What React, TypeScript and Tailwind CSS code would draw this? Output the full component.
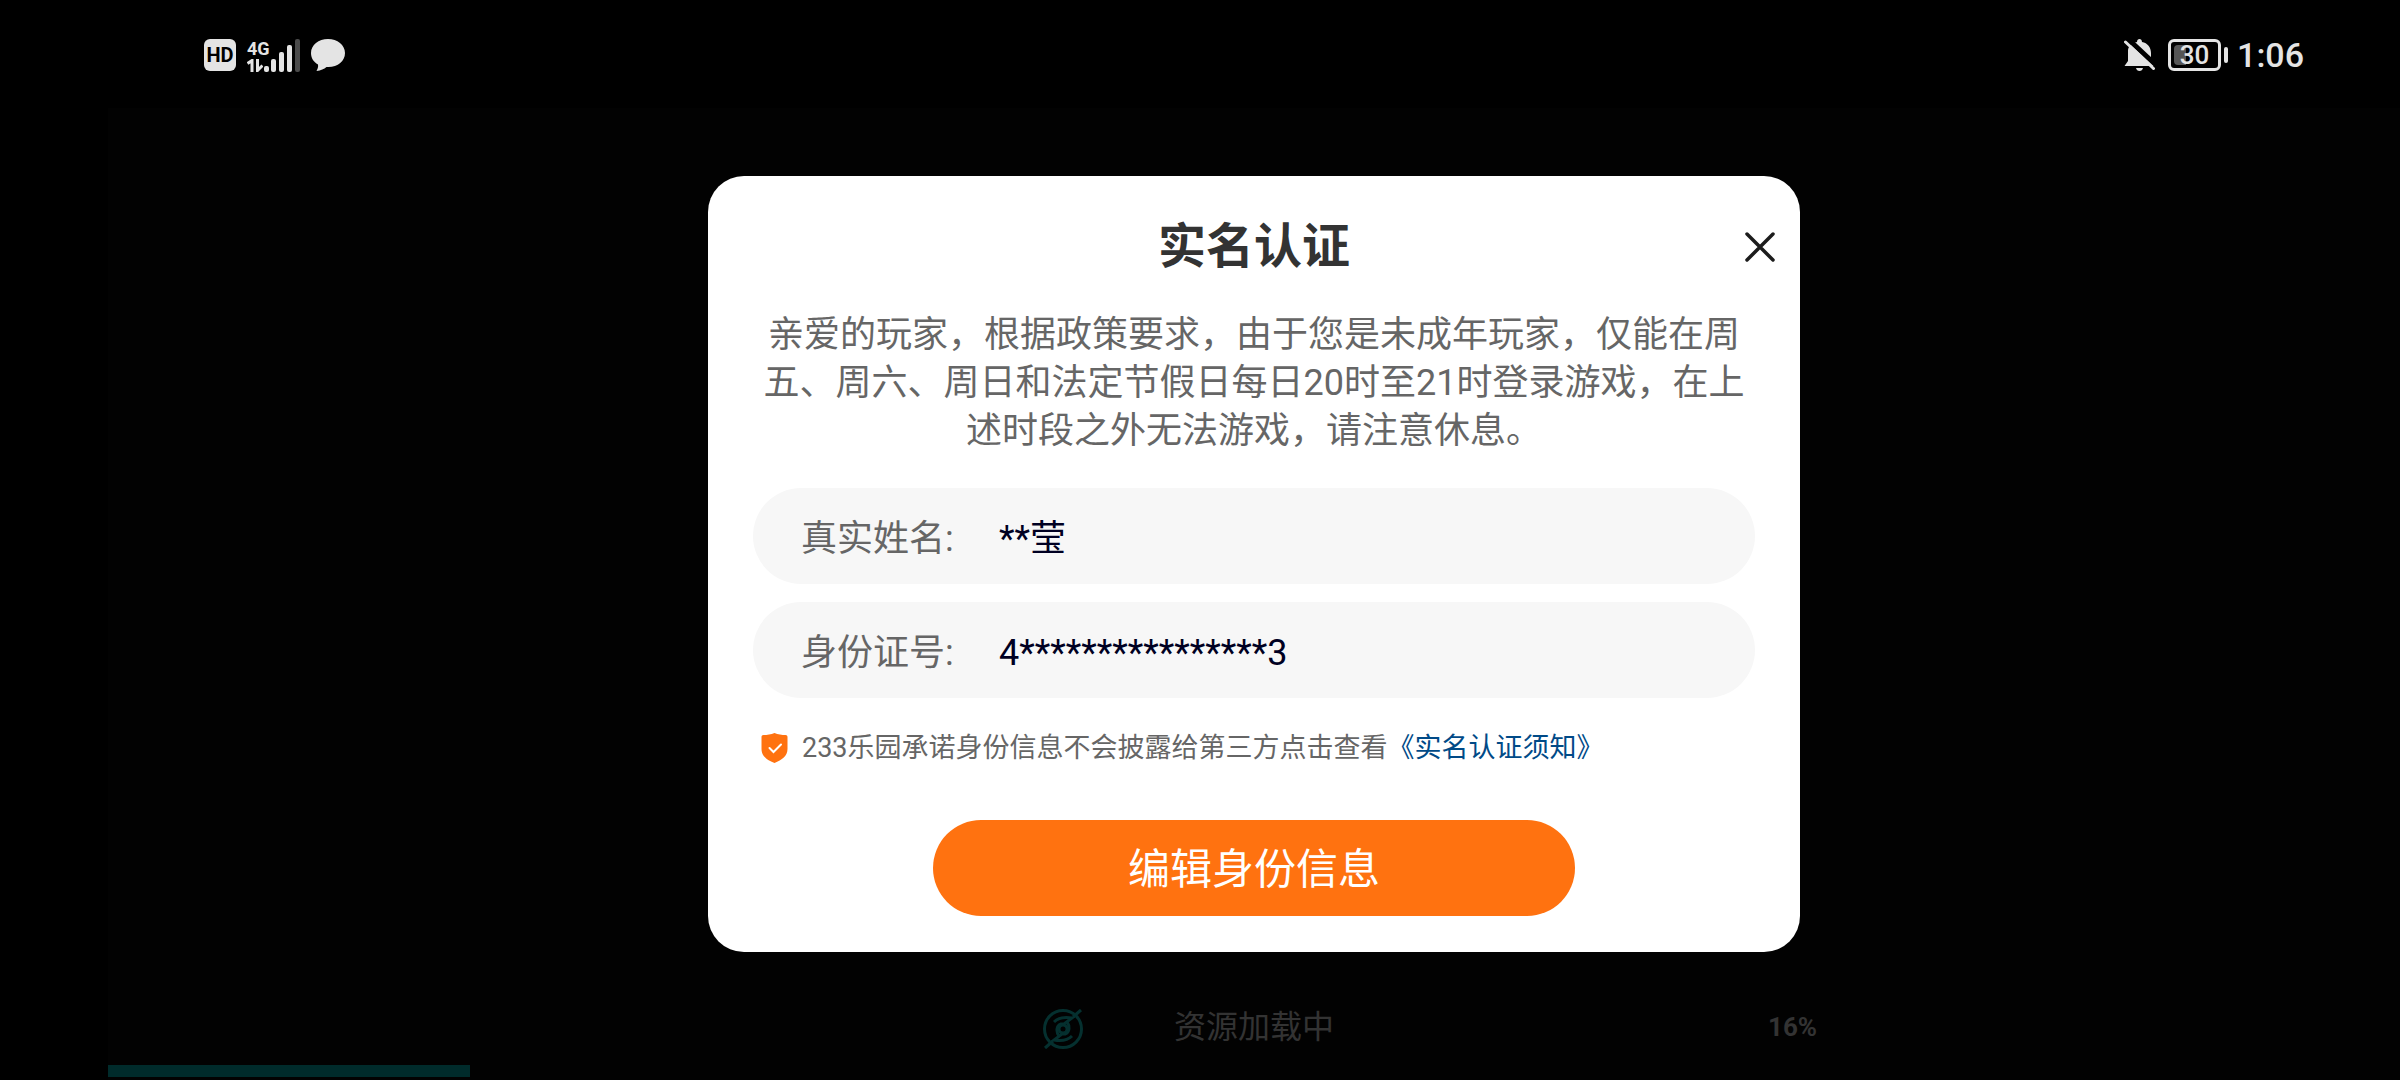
import type { ReactNode } from "react";

const LOADED = 0.158;

const SIGNAL_BARS = [
  { x: 0, h: 6, on: true },
  { x: 7, h: 13, on: true },
  { x: 15, h: 20, on: true },
  { x: 23, h: 27, on: true },
  { x: 31, h: 33, on: false },
];

export default function App() {
  return (
    <div className="flex min-h-screen flex-col bg-black font-['Roboto','Noto_Sans_CJK_SC',sans-serif]">
      <StatusBar />
      <main className="ml-[108px] flex flex-1 flex-col items-center bg-[#020202] pt-[68px]">
        <IdentityDialog />
        <LoadingRow />
      </main>
    </div>
  );
}

function StatusBar() {
  return (
    <header className="flex h-[108px] items-center justify-between pr-24 pl-[204px] text-[#e4e4e4]">
      <div className="flex items-center gap-[11px] pt-[2px]">
        <span className="flex size-8 items-center justify-center rounded-md bg-[#e4e4e4] text-[20px] leading-none font-bold text-black">
          HD
        </span>
        <div className="flex items-end">
          <div className="flex w-[17px] flex-col items-start">
            <span className="text-[18px] leading-[20px] font-bold">4G</span>
            <svg className="h-[13px] w-[16px]" viewBox="0 0 16 13" fill="none" stroke="currentColor" aria-hidden>
              <path d="M0.5 4.5 5 1.5V13" strokeWidth="3" />
              <path d="M10.5 0V11.5L15.5 6.5" strokeWidth="3" />
            </svg>
          </div>
          <svg className="h-[33px] w-[36px]" viewBox="0 0 36 33" aria-hidden>
            {SIGNAL_BARS.map((bar) => (
              <rect
                key={bar.x}
                x={bar.x}
                y={33 - bar.h}
                width="5"
                height={bar.h}
                rx="2"
                fill={bar.on ? "#e4e4e4" : "#4a4a4a"}
              />
            ))}
          </svg>
        </div>
        <svg className="h-8 w-[34px]" viewBox="0 0 34 32" fill="currentColor" aria-hidden>
          <path d="M17 0C7.600 0 0 6 0 14C0 19 2.500 23 7 25.500C7.500 28 6.500 30 5.500 32C10 31.500 13 30 15.500 28C26 28.800 34 22.500 34 14C34 6 26.400 0 17 0Z" />
        </svg>
      </div>

      <div className="flex items-center gap-[9px] pt-[2px]">
        <div className="flex items-center gap-3">
          <BellOff />
          <div className="flex items-center gap-[3px]">
            <span className="flex h-8 w-[53px] rounded-md border-3 border-current p-[3px]">
              <span className="flex flex-1 items-center justify-center rounded-sm bg-linear-to-r from-[#555] from-30% to-transparent to-30% text-[26px] leading-none font-medium">
                30
              </span>
            </span>
            <span className="h-4 w-1 rounded-sm bg-current" />
          </div>
        </div>
        <time className="text-[34px] leading-none font-medium">1:06</time>
      </div>
    </header>
  );
}

function BellOff() {
  return (
    <svg className="size-8" viewBox="0 0 32 32" aria-hidden>
      <path
        d="M13 3C13 1 14.200 0 15.500 0S18 1 18 3C23.500 4 27 8.500 27 14V21L31 27H0.500L4 22V12C4 7.500 7.500 4 13 3Z"
        fill="currentColor"
      />
      <path d="M12 29H19C18.500 31 17.300 32 15.500 32S12.500 31 12 29Z" fill="currentColor" />
      <path d="M4 0 33 27" stroke="#000" strokeWidth="5" />
      <path d="M1.500 3 29.500 29.500" stroke="currentColor" strokeWidth="3" strokeLinecap="round" />
    </svg>
  );
}

function IdentityDialog() {
  return (
    <section
      role="dialog"
      aria-labelledby="dialog-title"
      className="flex w-full max-w-[1092px] flex-col rounded-[36px] bg-white py-9"
    >
      <div className="grid grid-cols-[1fr_auto_1fr] items-center pr-[25px]">
        <h1 id="dialog-title" className="col-start-2 ml-[25px] text-[48px] leading-[70px] font-bold text-[#333]">
          实名认证
        </h1>
        <button type="button" aria-label="关闭" className="justify-self-end">
          <svg className="size-[30px]" viewBox="0 0 30 30" stroke="#1c1c1c" strokeWidth="3.500" strokeLinecap="round">
            <path d="M2 2 28 28M28 2 2 28" />
          </svg>
        </button>
      </div>

      <div className="flex flex-col px-[45px]">
        <p className="mt-[29px] text-center text-[36px] leading-[48px] text-[#666]">
          亲爱的玩家，根据政策要求，由于您是未成年玩家，仅能在周五、周六、周日和法定节假日每日20时至21时登录游戏，在上述时段之外无法游戏，请注意休息。
        </p>

        <form className="mt-[33px] flex flex-col gap-[18px]">
          <Field id="real-name" label="真实姓名:" value="**莹" />
          <Field id="id-number" label="身份证号:" value="4****************3" />
        </form>

        <div className="mt-[30px] flex items-center gap-[14px] pl-2 text-[27px] leading-[40px] text-[#666]">
          <Shield />
          <p>
            233乐园承诺身份信息不会披露给第三方点击查看
            <a href="#notice" className="text-[#004a87]">《实名认证须知》</a>
          </p>
        </div>

        <PrimaryButton>编辑身份信息</PrimaryButton>
      </div>
    </section>
  );
}

function Field({ id, label, value }: { id: string; label: string; value: string }) {
  return (
    <div className="flex h-24 items-center rounded-full bg-[#f7f7f7] px-12 pt-[6px] text-[36px]">
      <label htmlFor={id} className="w-[198px] text-[#666]">
        {label}
      </label>
      <input id={id} readOnly defaultValue={value} className="min-w-0 flex-1 bg-transparent text-[#000022] outline-none" />
    </div>
  );
}

function Shield() {
  return (
    <svg className="h-[30px] w-[27px]" viewBox="0 0 27 30" aria-hidden>
      <path
        d="M13.500 0C17 1.500 21 2 24.500 2C25.800 2 26.500 2.700 26.500 4V16C26.500 23 21 27 13.500 30C6 27 0.500 23 0.500 16V4C0.500 2.700 1.200 2 2.500 2C6 2 10 1.500 13.500 0Z"
        fill="#ff7210"
      />
      <path d="M8.500 15 12.500 19 20 11.500" fill="none" stroke="#fff" strokeWidth="2" strokeLinecap="round" />
    </svg>
  );
}

function PrimaryButton({ children }: { children: ReactNode }) {
  return (
    <button
      type="button"
      className="mt-[52px] h-24 w-full max-w-[642px] self-center rounded-full bg-[#ff7210] pt-[2px] text-[42px] text-white"
    >
      {children}
    </button>
  );
}

function LoadingRow() {
  return (
    <>
      <div className="mt-[51px] grid w-full grid-cols-[1fr_auto_1fr] items-center text-[#333]">
        <svg
          className="mt-1 mr-[90px] size-[42px] justify-self-end"
          viewBox="0 0 42 42"
          fill="none"
          stroke="#05302f"
          strokeWidth="3"
          aria-hidden
        >
          <circle cx="21" cy="21" r="18.500" />
          <circle cx="21" cy="21" r="4" />
          <path d="M39 2 31 9" />
          <path d="M3 40 11 33" />
          <path d="M12 14C17 9 24 9 30 10L22 16H19C14 18 14 24 17 28" />
          <path d="M30 28C25 33 18 33 12 32L20 26H23C28 24 28 18 25 14" />
        </svg>
        <span className="text-[32px] leading-[48px]">资源加载中</span>
        <span className="ml-[434px] text-[26px] leading-[48px] font-bold">{Math.round(LOADED * 100)}%</span>
      </div>
      <div
        role="progressbar"
        aria-label="资源加载中"
        aria-valuenow={Math.round(LOADED * 100)}
        className="mt-[14px] w-full"
      >
        <div className="h-3 bg-[#002b2b]" style={{ width: `${LOADED * 100}%` }} />
      </div>
    </>
  );
}
